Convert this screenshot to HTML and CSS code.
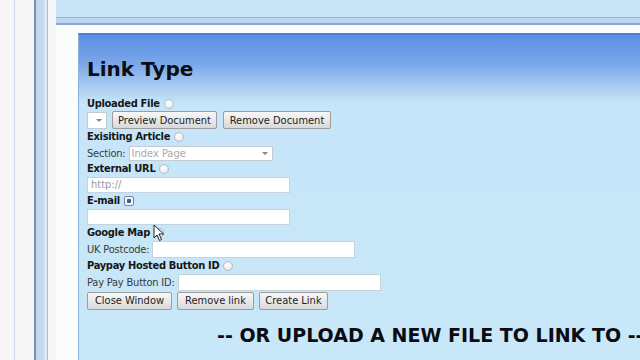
FILE: index.html
```html
<html>
<head>
    <title>Link Type</title>
    <link rel="stylesheet" href="styles.css">
</head>
<body>
    <div class="page">
        <div class="chrome">
            <div class="strip strip-a"></div>
            <div class="strip strip-b"></div>
            <div class="strip strip-c"></div>
        </div>
        <div class="main">
            <div class="topbar">
                <div class="topbar-fill"></div>
                <div class="topbar-band"></div>
                <div class="topbar-white"></div>
            </div>
            <div class="content">
                <div class="gutter"></div>
                <div class="panel">
                    <h1 class="title">Link Type</h1>

                    <div class="label label-first">Uploaded File <span class="radio"></span></div>
                    <div class="row">
                        <span class="select select-tiny"><span class="arrow"></span></span>
                        <span class="button btn-preview">Preview Document</span>
                        <span class="button btn-remove-doc">Remove Document</span>
                    </div>

                    <div class="label">Exisiting Article <span class="radio"></span></div>
                    <div class="row row-field">
                        <span class="sub">Section:</span>
                        <span class="select select-wide">Index Page<span class="arrow"></span></span>
                    </div>

                    <div class="label">External URL <span class="radio"></span></div>
                    <div class="row row-input">
                        <span class="input">http://</span>
                    </div>

                    <div class="label">E-mail <span class="radio radio-checked"></span></div>
                    <div class="row row-input">
                        <span class="input"></span>
                    </div>

                    <div class="label">Google Map <span class="radio radio-hover"></span>
                        <svg class="cursor" width="12" height="18" viewBox="0 0 12 18">
                            <path d="M1 1 L1 14 L4 11 L6.5 16.5 L8.5 15.5 L6 10 L10.5 10 Z" fill="#fff" stroke="#222" stroke-width="1"/>
                        </svg>
                    </div>
                    <div class="row row-field row-tall">
                        <span class="sub">UK Postcode:</span>
                        <span class="input input-tall"></span>
                    </div>

                    <div class="label">Paypay Hosted Button ID <span class="radio"></span></div>
                    <div class="row row-field row-tall">
                        <span class="sub">Pay Pay Button ID:</span>
                        <span class="input input-tall"></span>
                    </div>

                    <div class="row row-buttons">
                        <span class="button btn-close">Close Window</span>
                        <span class="button btn-remove">Remove link</span>
                        <span class="button btn-create">Create Link</span>
                    </div>

                    <h2 class="upload">-- OR UPLOAD A NEW FILE TO LINK TO --</h2>
                </div>
            </div>
        </div>
    </div>
</body>
</html>
```

FILE: styles.css
```css
body {
    margin: 0;
    width: 640px;
    height: 360px;
    overflow: hidden;
    background-color: #f7f7f7;
    font-family: "DejaVu Sans Condensed", "DejaVu Sans", sans-serif;
}
.page {
    display: flex;
    height: 360px;
}
.chrome {
    display: flex;
    width: 56px;
    flex-shrink: 0;
}
.strip-a {
    width: 14px;
    border-right: 1px solid #cdd8e6;
    background-color: #f7f7f7;
}
.strip-b {
    width: 19px;
    border-right: 2px solid #7990b0;
    background-color: #f6f6f6;
}
.strip-c {
    width: 11px;
    background-color: #c4d8ee;
    border-right: 1px solid #a9bfdb;
    box-shadow: inset -3px 0 0 #dce8f6;
    margin-right: 8px;
}
.main {
    flex: 1;
    display: flex;
    flex-direction: column;
}
.topbar-fill {
    height: 17px;
    background-color: #c9e4f7;
}
.topbar-band {
    height: 5px;
    background-color: #bcd5f0;
    border-top: 1px solid #98b6dc;
    border-bottom: 2px solid #8aa6c8;
}
.topbar-white {
    height: 8px;
    background-color: #fbfdfd;
}
.content {
    flex: 1;
    display: flex;
}
.gutter {
    width: 22px;
    background-color: #fbfcfc;
}
.panel {
    flex: 1;
    border-left: 1px solid #8fb0d8;
    border-top: 2px solid #4a7ed8;
    background: linear-gradient(to bottom, #5b8fe3 0px, #7ba8ea 30px, #a9cdf0 52px, #c6e5f8 68px, #c8e7f8 100%);
    padding-left: 8px;
    color: #111;
}
.title {
    margin: 0;
    padding-top: 22px;
    height: 39px;
    font-family: "DejaVu Sans", sans-serif;
    font-size: 20px;
    font-weight: bold;
    line-height: 24px;
    color: #0d0d14;
}
.label {
    position: relative;
    height: 16px;
    font-size: 11px;
    font-weight: bold;
    line-height: 16px;
    color: #161616;
    display: flex;
    align-items: center;
    gap: 4px;
    letter-spacing: -0.3px;
}
.label-first {
    height: 15px;
}
.radio {
    display: inline-block;
    width: 8px;
    height: 8px;
    border-radius: 50%;
    border: 1px solid #b4bcc4;
    background: radial-gradient(circle at 40% 40%, #ffffff, #dfe3e7);
}
.radio-hover {
    border-color: #8ab0d8;
}
.radio-checked {
    border-radius: 2px;
    border-color: #6d88aa;
    background: radial-gradient(circle, #3d5f8e 0, #3d5f8e 2px, #f2f4f6 2.5px);
}
.cursor {
    position: absolute;
    left: 66px;
    top: -1px;
}
.row {
    display: flex;
    align-items: center;
    gap: 5px;
    height: 18px;
}
.row-field {
    height: 16px;
    gap: 3px;
}
.row-tall {
    height: 17px;
}
.row-input {
    height: 16px;
}
.sub {
    font-size: 11px;
    color: #3a3a3a;
    letter-spacing: -0.2px;
}
.button {
    display: inline-flex;
    align-items: center;
    justify-content: center;
    box-sizing: border-box;
    height: 18px;
    font-size: 11px;
    color: #222;
    border: 1px solid #9c9c9c;
    border-radius: 2px;
    background: linear-gradient(to bottom, #f7f7f7, #e6e6e6 60%, #d8d8d8);
}
.btn-preview {
    width: 105px;
}
.btn-remove-doc {
    width: 108px;
    margin-left: 1px;
}
.btn-close {
    width: 85px;
}
.btn-remove {
    width: 77px;
}
.btn-create {
    width: 69px;
}
.row-buttons {
    height: 19px;
}
.select {
    position: relative;
    display: inline-block;
    box-sizing: border-box;
    background-color: #fff;
    border: 1px solid #c3ccd5;
    font-size: 11px;
    color: #a8a8a8;
    padding-left: 2px;
    line-height: 13px;
}
.select-tiny {
    width: 20px;
    height: 17px;
}
.select-wide {
    width: 144px;
    height: 15px;
}
.arrow {
    position: absolute;
    right: 4px;
    top: 50%;
    margin-top: -1px;
    border-left: 3px solid transparent;
    border-right: 3px solid transparent;
    border-top: 3px solid #888;
}
.input {
    display: inline-block;
    box-sizing: border-box;
    width: 203px;
    height: 16px;
    background-color: #fff;
    border: 1px solid #c6d2dc;
    font-size: 11px;
    color: #9a9a9a;
    padding-left: 3px;
    line-height: 14px;
}
.input-tall {
    height: 17px;
}
.upload {
    margin: 0;
    padding-top: 14px;
    padding-left: 130px;
    white-space: nowrap;
    font-family: "DejaVu Sans", sans-serif;
    font-size: 19px;
    font-weight: bold;
    color: #0b0b10;
}
```
